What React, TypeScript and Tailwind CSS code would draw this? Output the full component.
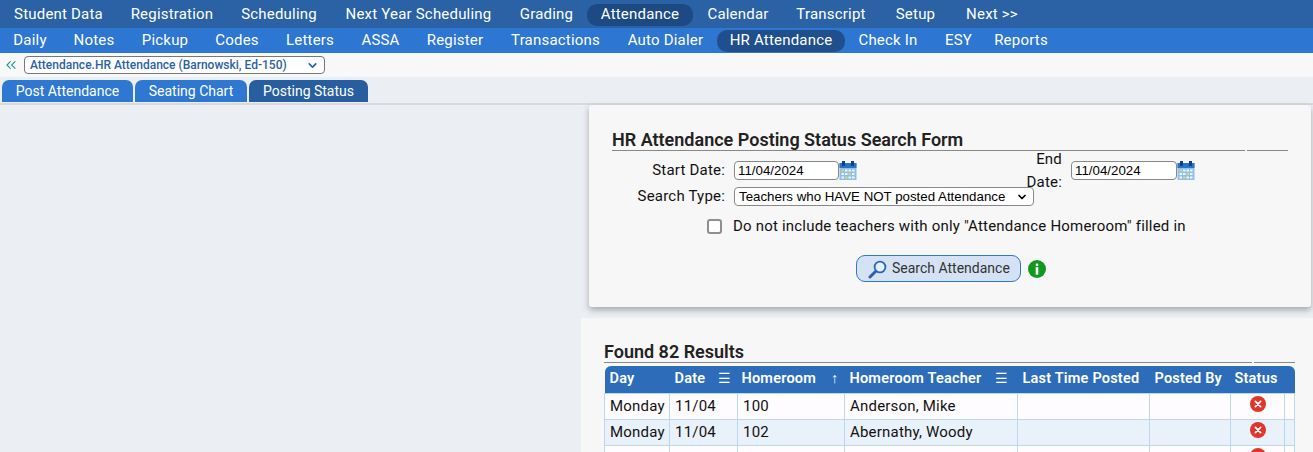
import { ChevronDown, ChevronsLeft } from "lucide-react"

const mainMenu = [
  { label: "Student Data", w: "w-[117px]" },
  { label: "Registration", w: "w-[110px]" },
  { label: "Scheduling", w: "w-[104px]" },
  { label: "Next Year Scheduling", w: "w-[175px]" },
  { label: "Grading", w: "w-[81px]" },
  { label: "Attendance", w: "w-[106px]", active: true },
  { label: "Calendar", w: "w-[90px]" },
  { label: "Transcript", w: "w-[96px]" },
  { label: "Setup", w: "w-[73px]" },
  { label: "Next >>", w: "w-[80px]" },
]

const subMenu = [
  { label: "Daily", w: "w-[60px]" },
  { label: "Notes", w: "w-[68px]" },
  { label: "Pickup", w: "w-[74px]" },
  { label: "Codes", w: "w-[70px]" },
  { label: "Letters", w: "w-[76px]" },
  { label: "ASSA", w: "w-[65px]" },
  { label: "Register", w: "w-[84px]" },
  { label: "Transactions", w: "w-[117px]" },
  { label: "Auto Dialer", w: "w-[103px]" },
  { label: "HR Attendance", w: "w-[128px]", active: true },
  { label: "Check In", w: "w-[86px]" },
  { label: "ESY", w: "w-[55px]" },
  { label: "Reports", w: "w-[70px]" },
]

const tabs = [
  { label: "Post Attendance", w: "w-[131px]", bg: "bg-[#2e78d2]" },
  { label: "Seating Chart", w: "w-[112px]", bg: "bg-[#2e78d2]" },
  { label: "Posting Status", w: "w-[119px]", bg: "bg-[#265e9f]" },
]

const rows = [
  { day: "Monday", date: "11/04", room: "100", teacher: "Anderson, Mike", bg: "bg-[#fffcff]" },
  { day: "Monday", date: "11/04", room: "102", teacher: "Abernathy, Woody", bg: "bg-[#e9f2fa]" },
  { day: "", date: "", room: "", teacher: "", bg: "bg-[#fffcff]" },
]

const CalendarIcon = () => (
  <svg width="18" height="19" viewBox="0 0 18 19" className="shrink-0">
    <rect x="0.5" y="2" width="17" height="17" fill="#8cc0ee" />
    <rect x="0.5" y="2" width="17" height="5" fill="#2474c8" />
    <rect x="3" y="0" width="3" height="5" fill="#123f86" />
    <rect x="12" y="0" width="3" height="5" fill="#123f86" />
    {[8.5, 12, 15.5].map((y) =>
      [2.5, 6, 9.5, 13].map((x) => (
        <rect key={`${x}-${y}`} x={x} y={y} width="2.5" height="2" fill={(x === 2.5 && y === 8.5) || (x === 9.5 && y === 12) || (x === 6 && y === 15.5) ? "#f0d060" : "#eef5fc"} />
      ))
    )}
  </svg>
)

const MagnifierIcon = () => (
  <svg width="20" height="20" viewBox="0 0 20 20" className="shrink-0">
    <path d="M7.5 12.5 L2 18" stroke="#2a5fb0" strokeWidth="3" strokeLinecap="round" />
    <circle cx="12" cy="8" r="5.4" fill="#e6f0fb" stroke="#2366c4" strokeWidth="1.8" />
  </svg>
)

const InfoIcon = () => (
  <svg width="18" height="18" viewBox="0 0 18 18" className="shrink-0">
    <circle cx="9" cy="9" r="9" fill="#12971f" />
    <rect x="7.7" y="3.4" width="2.6" height="2.6" rx="1" fill="#fff" />
    <rect x="7.7" y="7.2" width="2.6" height="7.4" fill="#fff" />
  </svg>
)

const ErrorIcon = () => (
  <svg width="16" height="16" viewBox="0 0 16 16" className="mx-auto">
    <circle cx="8" cy="8" r="8" fill="#e1352b" />
    <path d="M5.4 5.4 L10.6 10.6 M10.6 5.4 L5.4 10.6" stroke="#fff" strokeWidth="1.8" strokeLinecap="round" />
  </svg>
)

const MenuIcon = () => <span className="text-[14px] font-normal">☰</span>

const SectionTitle = ({ title, split }: { title: string; split: string }) => (
  <div>
    <h2 className="text-[18px] leading-[21px] font-semibold text-[#222]">{title}</h2>
    <div className="flex gap-[2px]">
      <div className="h-px flex-1 bg-[#888]" />
      <div className={`h-px ${split} bg-[#888]`} />
    </div>
  </div>
)

const App = () => {
  return (
    <div className="h-[452px] overflow-hidden bg-[#ebeff4] text-[15px] font-['Roboto',sans-serif] text-[#111]">
      <nav className="flex h-[28px] items-center bg-[#2a62a5] pt-[1px] text-[15px] tracking-[0.2px] text-white">
        {mainMenu.map((m) => (
          <div key={m.label} className={`${m.w} flex h-[22px] shrink-0 items-center justify-center rounded-[10px] ${m.active ? "bg-[#1d4a82]" : ""}`}>
            {m.label}
          </div>
        ))}
      </nav>
      <nav className="flex h-[25px] items-center bg-[#2d76d2] text-[15px] tracking-[0.2px] text-white">
        {subMenu.map((m) => (
          <div key={m.label} className={`${m.w} flex h-[22px] shrink-0 items-center justify-center rounded-[10px] ${m.active ? "bg-[#1f4f8c]" : ""}`}>
            {m.label}
          </div>
        ))}
      </nav>
      <div className="flex h-[24px] items-center bg-[#f8f8f8] pl-[3px]">
        <ChevronsLeft size={16} className="text-[#1e9c93]" strokeWidth={1.6} />
        <div className="ml-[5px] flex h-[18px] w-[301px] items-center justify-between rounded-[4px] border border-[#777] bg-white pr-[5px] pl-[5px] text-[12px] font-medium text-[#2a62a5]">
          <span>Attendance.HR Attendance (Barnowski, Ed-150)</span>
          <ChevronDown size={13} strokeWidth={3} className="text-[#2a62a5]" />
        </div>
      </div>
      <div className="flex h-[28px] gap-[2px] border-b-2 border-[#d8dadd] pt-[3px] pl-[2px]">
        {tabs.map((t) => (
          <div key={t.label} className={`${t.w} ${t.bg} flex h-[22px] items-center justify-center rounded-t-[7px] text-[14px] text-white`}>
            {t.label}
          </div>
        ))}
      </div>
      <main className="flex flex-col items-end">
        <section className="mr-[2px] h-[202px] w-[722px] rounded-[3px] bg-[#f7f7f7] pt-[24px] pr-[23px] pl-[23px] shadow-[0_3px_6px_rgba(0,0,0,0.3)]">
          <SectionTitle title="HR Attendance Posting Status Search Form" split="w-[41px]" />
          <div className="mt-[9px] flex h-[21px] items-center">
            <label className="w-[113px] text-right text-[15px] tracking-[0.2px]">Start Date:</label>
            <div className="ml-[9px] flex h-[19px] w-[105px] items-center rounded-[4px] border border-[#888] bg-white pl-[3px] font-['Liberation_Sans',sans-serif] text-[13.3px] text-black">11/04/2024</div>
            <CalendarIcon />
            <label className="ml-[140px] w-[0px] grow text-right text-[15px] tracking-[0.2px]">End Date:</label>
            <div className="ml-[9px] flex h-[19px] w-[106px] items-center rounded-[4px] border border-[#888] bg-white pl-[3px] font-['Liberation_Sans',sans-serif] text-[13.3px] text-black">11/04/2024</div>
            <CalendarIcon />
            <div className="w-[93px]" />
          </div>
          <div className="mt-[6px] flex h-[19px] items-center">
            <label className="w-[113px] text-right text-[15px] tracking-[0.2px]">Search Type:</label>
            <div className="ml-[9px] flex h-[19px] w-[300px] items-center justify-between rounded-[4px] border border-[#888] bg-white pr-[5px] pl-[4px] font-['Liberation_Sans',sans-serif] text-[13.3px] text-black">
              <span>Teachers who HAVE NOT posted Attendance</span>
              <ChevronDown size={12} strokeWidth={3.5} />
            </div>
          </div>
          <div className="mt-[10px] flex h-[20px] items-center pl-[95px]">
            <input type="checkbox" className="h-[15px] w-[15px] appearance-none rounded-[3px] border-2 border-[#8f8f8f] bg-white" readOnly />
            <span className="ml-[11px] text-[15px] tracking-[0.2px]">Do not include teachers with only "Attendance Homeroom" filled in</span>
          </div>
          <div className="mt-[19px] flex items-center pl-[244px]">
            <div className="flex h-[27px] w-[165px] items-center gap-[4px] rounded-[9px] border border-[#2d76d2] bg-[#d5e2f3] pl-[11px] text-[14px] text-[#333]">
              <MagnifierIcon />
              <span>Search Attendance</span>
            </div>
            <div className="ml-[7px]"><InfoIcon /></div>
          </div>
        </section>
        <section className="mt-[11px] h-[200px] w-[732px] bg-[#f7f7f7] pt-[23px] pr-[18px] pl-[23px]">
          <SectionTitle title="Found 82 Results" split="w-[41px]" />
          <table className="mt-[3px] w-[691px] table-fixed border-collapse text-[15px] tracking-[0.2px]">
            <colgroup>
              <col className="w-[65px]" />
              <col className="w-[68px]" />
              <col className="w-[107px]" />
              <col className="w-[173px]" />
              <col className="w-[132px]" />
              <col className="w-[81px]" />
              <col className="w-[54px]" />
              <col />
            </colgroup>
            <thead>
              <tr className="h-[27px] bg-[#2d6cb9] text-left text-[14.5px] font-semibold text-white">
                <th className="rounded-tl-[6px] pl-[5px] font-semibold">Day</th>
                <th className="pl-[5px] font-semibold"><div className="flex justify-between pr-[6px]">Date<MenuIcon /></div></th>
                <th className="pl-[4px] font-semibold"><div className="flex justify-between pr-[6px]">Homeroom<span className="font-normal">↑</span></div></th>
                <th className="pl-[5px] font-semibold"><div className="flex justify-between pr-[9px]">Homeroom Teacher<MenuIcon /></div></th>
                <th className="pl-[5px] font-semibold">Last Time Posted</th>
                <th className="pl-[5px] font-semibold">Posted By</th>
                <th className="pl-[4px] font-semibold">Status</th>
                <th className="rounded-tr-[6px]" />
              </tr>
            </thead>
            <tbody>
              {rows.map((r, i) => (
                <tr key={i} className={`h-[26px] ${r.bg}`}>
                  <td className="border border-[#bcd8f0] pl-[5px]">{r.day}</td>
                  <td className="border border-[#bcd8f0] pl-[5px]">{r.date}</td>
                  <td className="border border-[#bcd8f0] pl-[5px]">{r.room}</td>
                  <td className="border border-[#bcd8f0] pl-[5px]">{r.teacher}</td>
                  <td className="border border-[#bcd8f0]" />
                  <td className="border border-[#bcd8f0]" />
                  <td className="border border-[#bcd8f0]"><div className="-mt-[4px]"><ErrorIcon /></div></td>
                  <td className="border border-[#bcd8f0]" />
                </tr>
              ))}
            </tbody>
          </table>
        </section>
      </main>
    </div>
  )
}

export default App
